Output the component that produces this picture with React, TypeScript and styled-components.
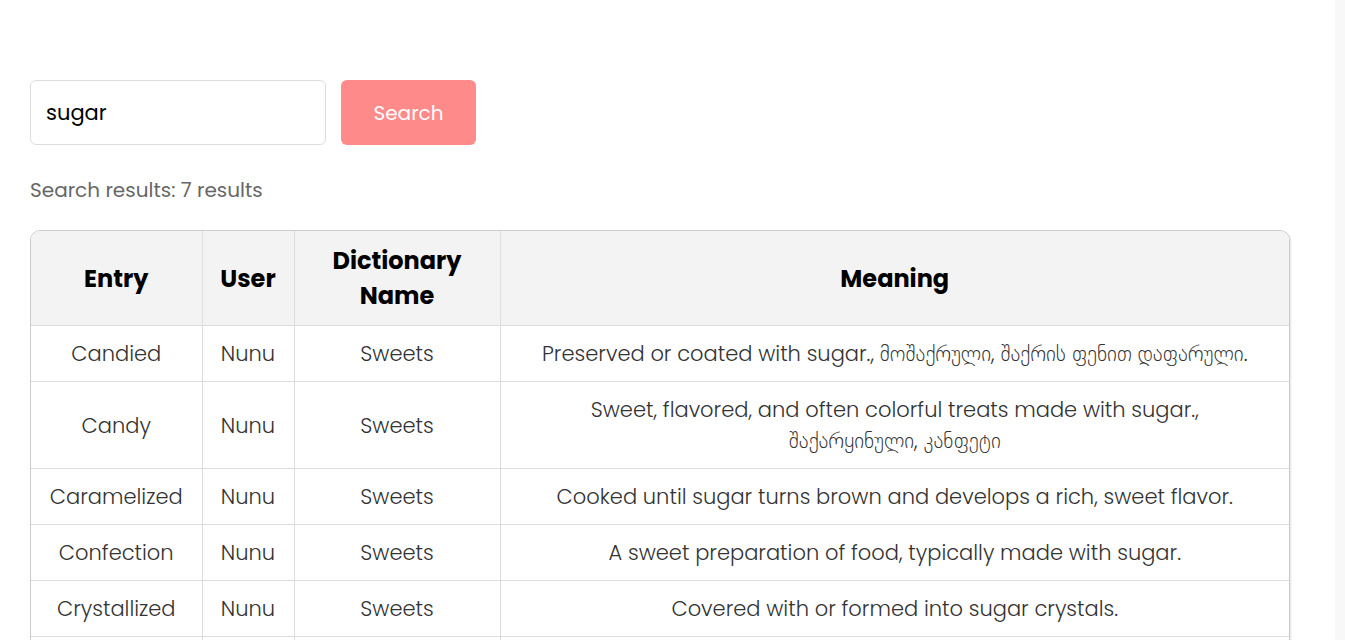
import React from "react";
import styled, { createGlobalStyle } from "styled-components";

const Global = createGlobalStyle`
  html, body { margin: 0; padding: 0; background: #ffffff; }
  body { font-family: "Poppins", "Open Sans", "DejaVu Sans", sans-serif; color: #333; }
`;

const Page = styled.main`
  padding: 80px 0 40px 30px;
  display: flex;
  flex-direction: column;
`;

const SearchBar = styled.form`
  display: flex;
  gap: 15px;
  align-items: stretch;
`;

const Input = styled.input`
  width: 296px;
  height: 65px;
  box-sizing: border-box;
  border: 1px solid #dddddd;
  border-radius: 6px;
  padding: 0 15px;
  font-family: inherit;
  font-size: 21px;
  color: #000;
  outline: none;
`;

const Button = styled.button`
  width: 135px;
  height: 65px;
  border: none;
  border-radius: 6px;
  background: #ff8a8a;
  color: #ffffff;
  font-family: inherit;
  font-size: 20px;
  cursor: pointer;
`;

const ResultCount = styled.p`
  margin: 33px 0 28px;
  font-size: 20px;
  line-height: 24px;
  color: #666666;
`;

const TableWrap = styled.div`
  width: 1260px;
  box-sizing: border-box;
  border: 1px solid #cccccc;
  border-radius: 10px;
  overflow: hidden;
  box-shadow: 1px 1px 2px rgba(0, 0, 0, 0.12);
`;

const Table = styled.table`
  width: 100%;
  border-collapse: collapse;
  table-layout: fixed;
`;

const Th = styled.th`
  background: #f3f3f3;
  color: #000;
  font-size: 24px;
  font-weight: 700;
  line-height: 35px;
  padding: 12px 10px;
  text-align: center;
  border-right: 1px solid #dddddd;
  border-bottom: 1px solid #dddddd;
  &:last-child { border-right: none; }
`;

const Td = styled.td<{ $wide?: boolean }>`
  font-size: 21px;
  font-weight: 300;
  line-height: 31px;
  padding: ${(p) => (p.$wide ? "12px 26px" : "12px 8px")};
  color: #333333;
  text-align: center;
  border-right: 1px solid #dddddd;
  border-bottom: 1px solid #dddddd;
  &:last-child { border-right: none; }
`;

const Scrollbar = styled.div`
  position: fixed;
  top: 0;
  right: 0;
  width: 10px;
  height: 100vh;
  background: #f8f8f8;
`;

const rows = [
  ["Candied", "Nunu", "Sweets", "Preserved or coated with sugar., მოშაქრული, შაქრის ფენით დაფარული."],
  ["Candy", "Nunu", "Sweets", "Sweet, flavored, and often colorful treats made with sugar., შაქარყინული, კანფეტი"],
  ["Caramelized", "Nunu", "Sweets", "Cooked until sugar turns brown and develops a rich, sweet flavor."],
  ["Confection", "Nunu", "Sweets", "A sweet preparation of food, typically made with sugar."],
  ["Crystallized", "Nunu", "Sweets", "Covered with or formed into sugar crystals."],
  ["Frosting", "Nunu", "Sweets", "A sweet, creamy glaze made with sugar used to coat cakes."],
  ["Syrup", "Nunu", "Sweets", "A thick, sticky liquid made by dissolving sugar in water."],
];

export default function App() {
  return (
    <>
      <Global />
      <Page>
        <SearchBar onSubmit={(e) => e.preventDefault()}>
          <Input defaultValue="sugar" />
          <Button type="submit">Search</Button>
        </SearchBar>
        <ResultCount>Search results: 7 results</ResultCount>
        <TableWrap>
          <Table>
            <colgroup>
              <col style={{ width: 171 }} />
              <col style={{ width: 92 }} />
              <col style={{ width: 206 }} />
              <col />
            </colgroup>
            <thead>
              <tr>
                <Th>Entry</Th>
                <Th>User</Th>
                <Th>Dictionary Name</Th>
                <Th>Meaning</Th>
              </tr>
            </thead>
            <tbody>
              {rows.map((r) => (
                <tr key={r[0]}>
                  {r.map((c, i) => (
                    <Td key={i} $wide={i === 3}>
                      {c}
                    </Td>
                  ))}
                </tr>
              ))}
            </tbody>
          </Table>
        </TableWrap>
      </Page>
      <Scrollbar />
    </>
  );
}
